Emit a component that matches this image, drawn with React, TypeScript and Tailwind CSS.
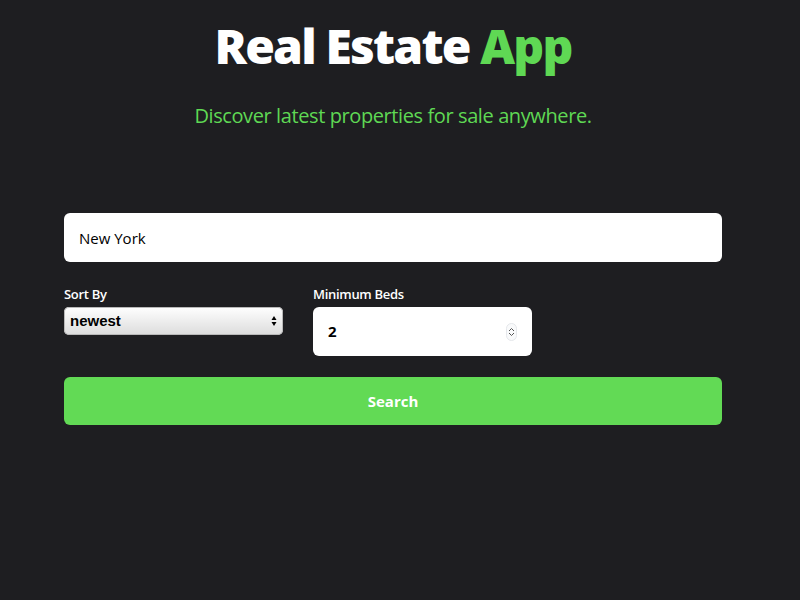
import React, { useState } from 'react';

const font = { fontFamily: '"Open Sans", "Liberation Sans", sans-serif' };

const SortArrows = () => (
    <svg width="6" height="12" viewBox="0 0 6 12" className="text-black">
        <path d="M3 1 L5.5 5 L0.5 5 Z" fill="currentColor" />
        <path d="M3 11 L5.5 7 L0.5 7 Z" fill="currentColor" />
    </svg>
);

const Spinner = () => (
    <div className="flex flex-col items-center justify-center w-[11px] h-[18px] rounded-full border border-gray-200 bg-gray-50">
        <svg width="7" height="5" viewBox="0 0 7 5"><path d="M1 4 L3.5 1.5 L6 4" stroke="#555" strokeWidth="1" fill="none" /></svg>
        <svg width="7" height="5" viewBox="0 0 7 5"><path d="M1 1 L3.5 3.5 L6 1" stroke="#555" strokeWidth="1" fill="none" /></svg>
    </div>
);

export default function App() {
    const [city, setCity] = useState("New York");
    const [beds, setBeds] = useState("2");

    return (
        <div className="w-[800px] h-[600px] bg-[#1e1e21] overflow-hidden" style={font}>
            <div className="ml-[64px] w-[658px] flex flex-col">
                <h1 className="mt-[10px] text-center text-[48px] leading-[72px] font-extrabold tracking-[-1.8px] text-white">
                    Real Estate <span className="text-[#5fd854]">App</span>
                </h1>
                <p className="mt-[19px] text-center text-[20px] leading-[30px] tracking-[-0.4px] text-[#5fd854]">
                    Discover latest properties for sale anywhere.
                </p>

                <input
                    className="mt-[82px] h-[49px] w-full rounded-[6px] bg-white px-[15px] text-[15px] font-medium text-black outline-none"
                    value={city}
                    onChange={e => setCity(e.target.value)}
                />

                <div className="mt-[23px] flex gap-[30px]">
                    <div className="flex w-[219px] flex-col">
                        <label className="text-[13px] leading-[18px] font-semibold text-white tracking-[-0.3px]">Sort By</label>
                        <div className="mt-[4px] flex h-[28px] items-center justify-between rounded-[5px] bg-gradient-to-b from-[#ffffff] to-[#dcdcdc] pl-[6px] pr-[6px] shadow-[inset_0_0_0_1px_#b9b9b9]">
                            <span className="text-[15px] font-bold text-black" style={{ fontFamily: '"Liberation Sans", Arial, sans-serif' }}>newest</span>
                            <SortArrows />
                        </div>
                    </div>
                    <div className="flex w-[219px] flex-col">
                        <label className="text-[13px] leading-[18px] font-semibold text-white tracking-[-0.3px]">Minimum Beds</label>
                        <div className="mt-[4px] flex h-[49px] items-center justify-between rounded-[6px] bg-white pl-[15px] pr-[15px]">
                            <input
                                className="w-[120px] bg-transparent text-[15px] font-bold text-black outline-none"
                                value={beds}
                                onChange={e => setBeds(e.target.value)}
                            />
                            <Spinner />
                        </div>
                    </div>
                </div>

                <button className="mt-[21px] h-[48px] w-full rounded-[6px] bg-[#62da55] text-[15px] font-bold text-white">
                    Search
                </button>
            </div>
        </div>
    );
}
